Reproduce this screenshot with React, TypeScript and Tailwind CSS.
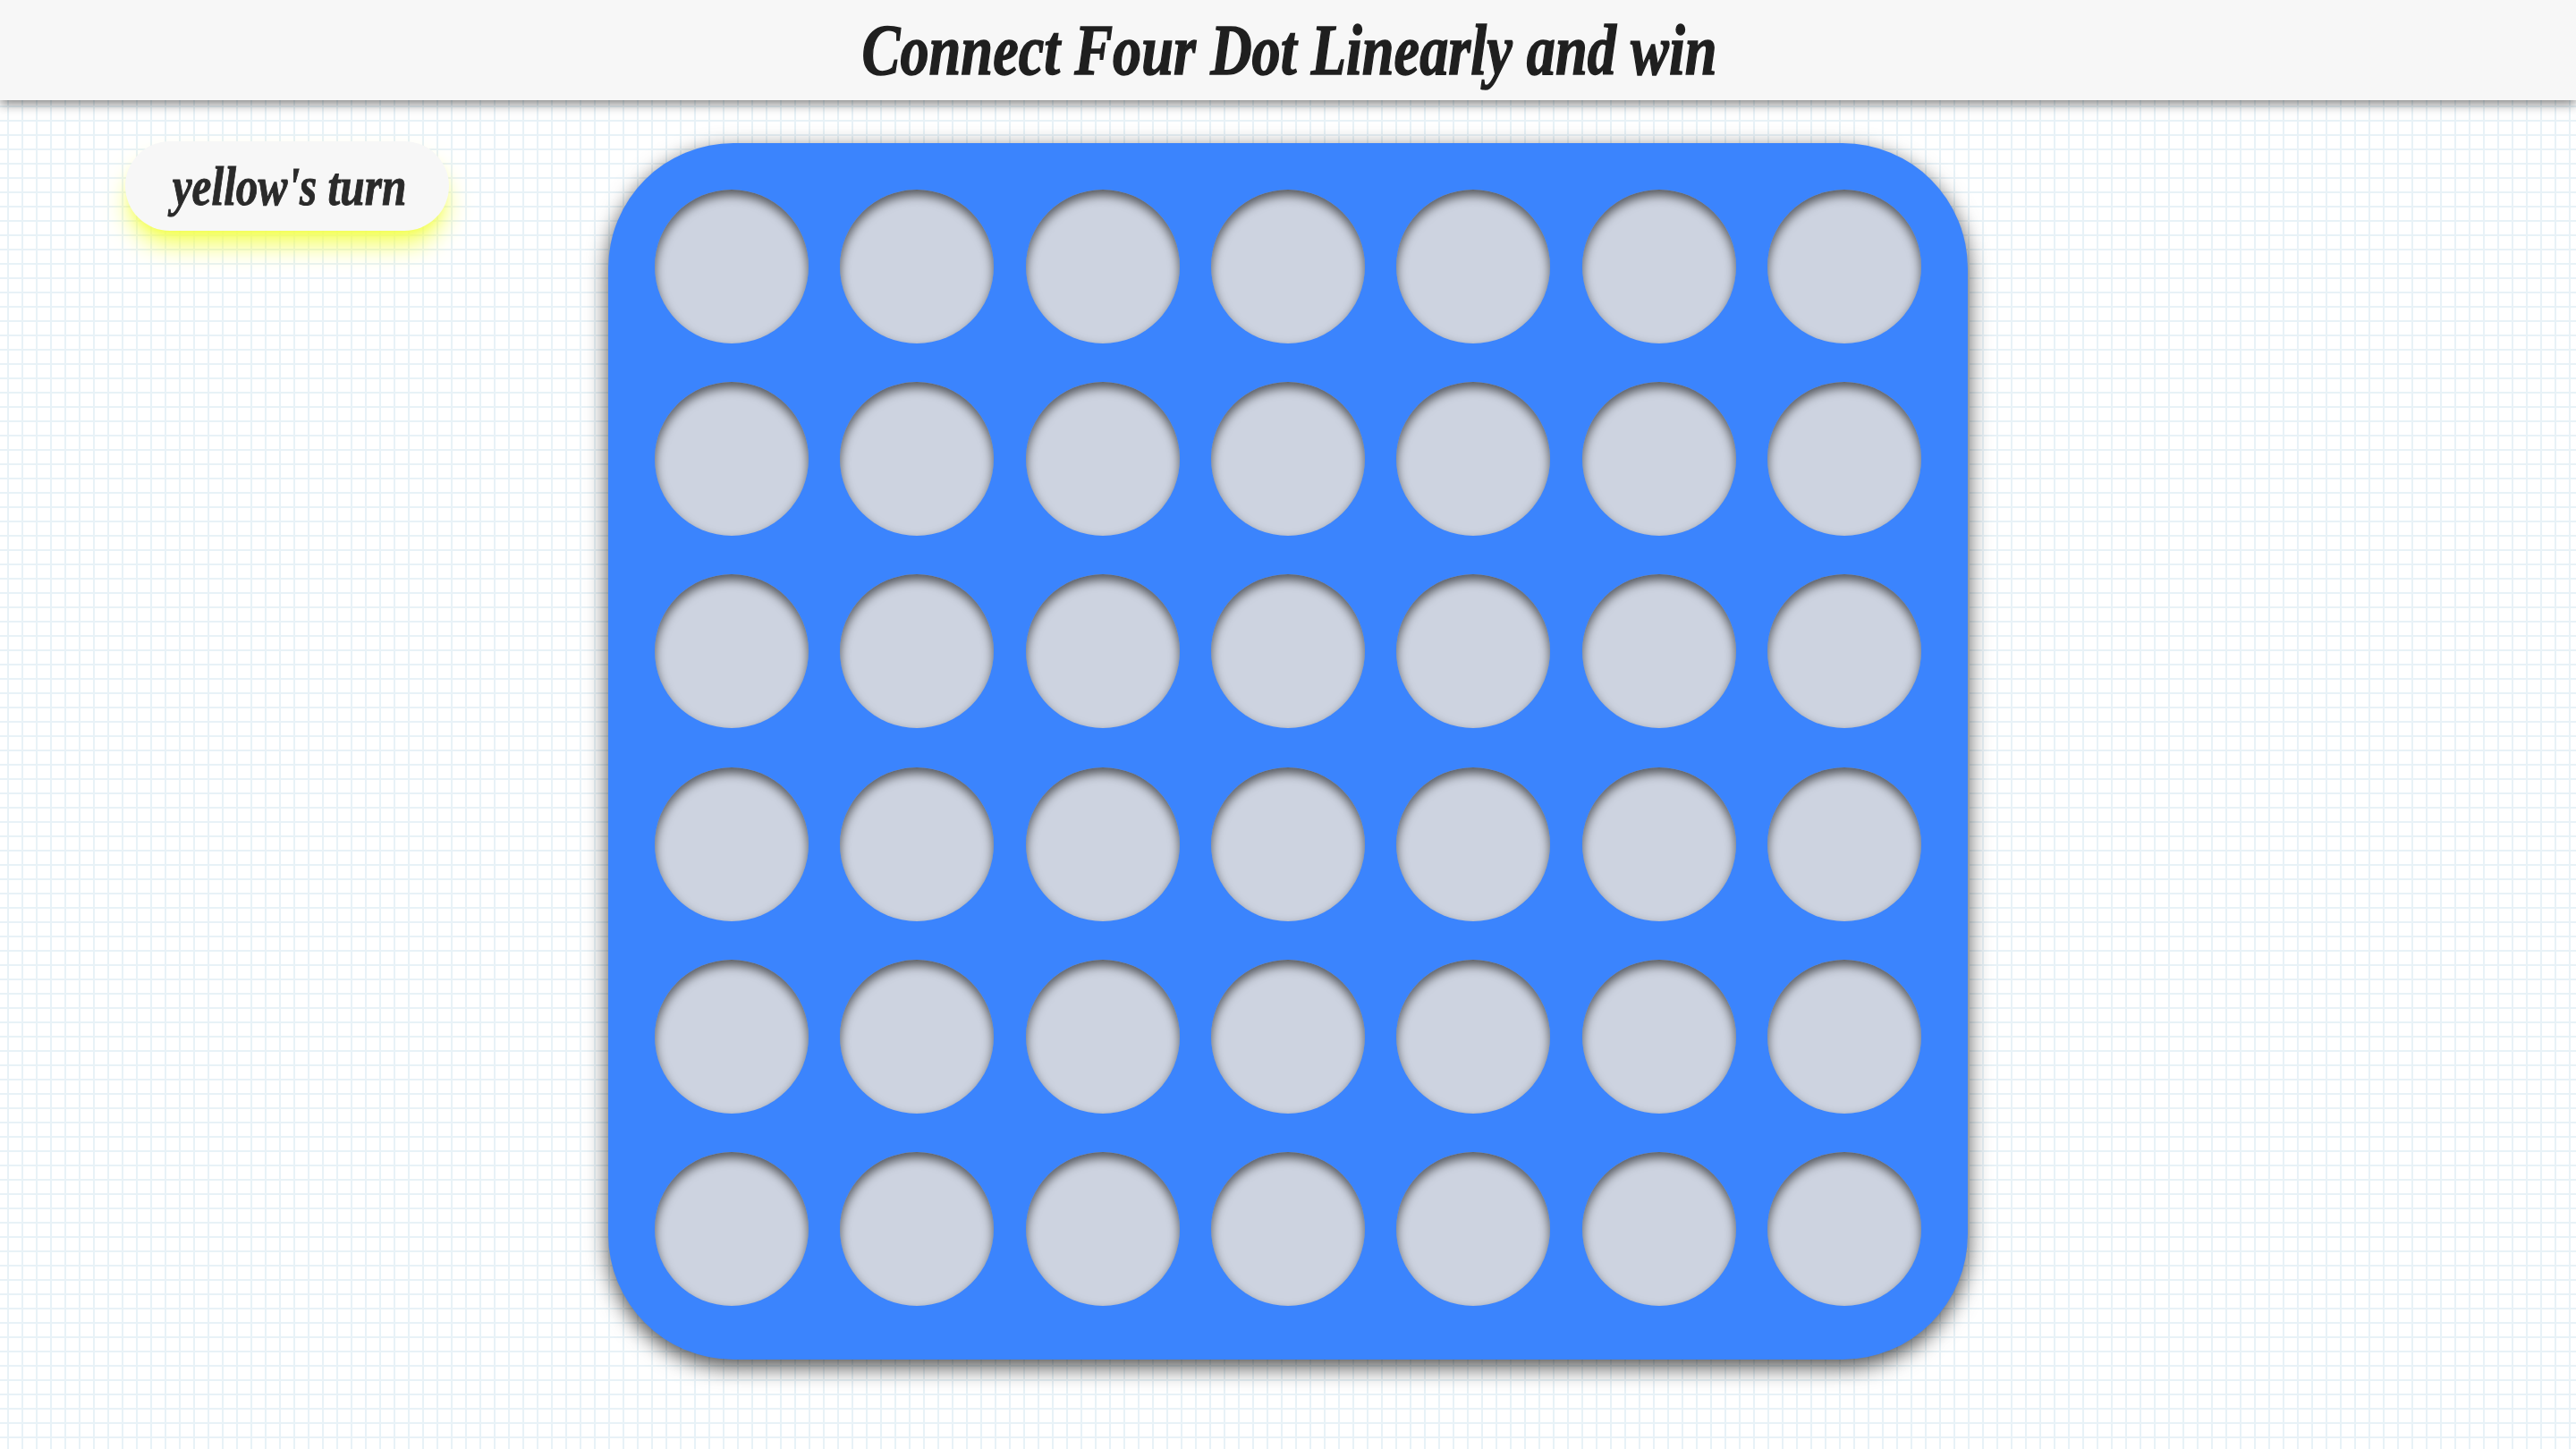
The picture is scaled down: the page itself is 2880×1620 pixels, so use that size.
const ROWS = 6;
const COLS = 7;

const lobsterish = "font-['Liberation_Serif',serif] font-bold italic";

export default function App() {
  const holes = Array.from({ length: ROWS * COLS }, (_, i) => i);

  return (
    <div className="min-h-screen bg-white bg-[linear-gradient(#e8f2f7_2px,transparent_2px),linear-gradient(90deg,#e8f2f7_2px,transparent_2px)] bg-[size:16px_16px] bg-[position:8px_6px]">
      <header className="relative flex h-[112px] items-center justify-center bg-[#f7f7f7] shadow-[0_4px_12px_rgba(0,0,0,0.5)]">
        <h1 className={`${lobsterish} inline-block translate-x-[2px] scale-x-[0.804] text-[80px] leading-none text-[#1f1f1f] [-webkit-text-stroke:1.5px_#1f1f1f]`}>
          Connect Four Dot Linearly and win
        </h1>
      </header>

      <main className="grid grid-cols-[680px_1520px_1fr] pt-[46px]">
        <div className="pl-[140px]">
          <div className="flex h-[100px] w-[362px] items-center justify-center rounded-[50px] bg-[#f7f7f7] shadow-[0_20px_30px_-6px_#f3ff4d,0_8px_12px_-8px_#f3ff4d]">
            <span className={`${lobsterish} inline-block translate-x-[3px] scale-x-[0.795] text-[62px] leading-none text-[#2a2a2a] [-webkit-text-stroke:1px_#2a2a2a]`}>
              yellow's turn
            </span>
          </div>
        </div>

        <div className="mt-[2px] grid h-[1360px] grid-cols-[repeat(7,172px)] content-start gap-x-[35.33px] gap-y-[43.2px] rounded-[140px] bg-[#3b84fd] px-[52px] pt-[52px] pb-[60px] shadow-[0_8px_24px_rgba(0,0,0,0.7)]">
          {holes.map((i) => (
            <div
              key={i}
              className="h-[172px] w-[172px] rounded-full bg-[#cdd3e0] shadow-[inset_0_6px_12px_rgba(0,0,0,0.6)]"
            />
          ))}
        </div>
      </main>
    </div>
  );
}
